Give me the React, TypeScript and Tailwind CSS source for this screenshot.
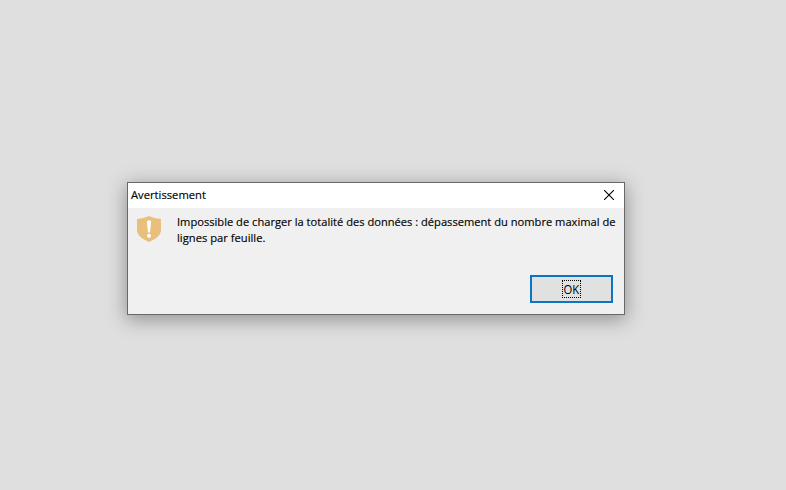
export default function App() {
  return (
    <main className="flex h-[490px] w-[786px] overflow-hidden bg-[#dfdfdf] pl-[127px] pt-[182px] font-['Open_Sans','Noto_Sans',sans-serif] text-[11.5px] text-black">
      <section role="dialog" className="flex h-[133px] w-[498px] flex-col border border-[#686868] bg-[#f0f0f0] shadow-[0_4px_18px_1px_rgba(0,0,0,0.34)]">
        <header className="flex h-[25px] shrink-0 items-center justify-between bg-white pb-px pl-[3px] pr-[10px]">
          <h1 className="origin-left scale-x-[0.975] whitespace-nowrap leading-4 [-webkit-text-stroke:0.15px_black]">Avertissement</h1>
          <button aria-label="Fermer">
            <svg width="10" height="10" viewBox="0 0 10 10" fill="none" stroke="#000" strokeWidth="1.1">
              <path d="M0 0l10 10M10 0L0 10" />
            </svg>
          </button>
        </header>
        <div className="flex shrink-0 pl-[9px] pt-[6px]">
          <svg className="mt-[2px] shrink-0" width="24" height="26" viewBox="0 0 24 26">
            <path d="M12 0C9 1.500 4.500 2.700 0 3V14c0 5 5 9 12 12c7-3 12-7 12-12V3C19.500 2.700 15 1.500 12 0z" fill="#e9bf7c" />
            <path d="M9.900 6Q9.900 4.200 12 4.200T14.100 6L13 16.500h-2z" fill="#fff" />
            <circle cx="12" cy="19.800" r="2" fill="#fff" />
          </svg>
          <div className="ml-4 whitespace-nowrap leading-4 [-webkit-text-stroke:0.15px_black]">
            <p className="w-max origin-left scale-x-[0.968]">Impossible de charger la totalité des données : dépassement du nombre maximal de</p>
            <p className="w-max origin-left scale-x-[0.975]">lignes par feuille.</p>
          </div>
        </div>
        <div className="mt-auto flex justify-end pb-[11px] pr-[11px]">
          <button className="flex h-7 w-[83px] items-center justify-center border-2 border-[#0b75c4] bg-[#e1e1e1]">
            <span className="flex h-[18px] w-[19px] items-center justify-center border border-dotted border-black pt-px">
              <span className="scale-x-[0.94] text-[12px]">OK</span>
            </span>
          </button>
        </div>
      </section>
    </main>
  );
}
